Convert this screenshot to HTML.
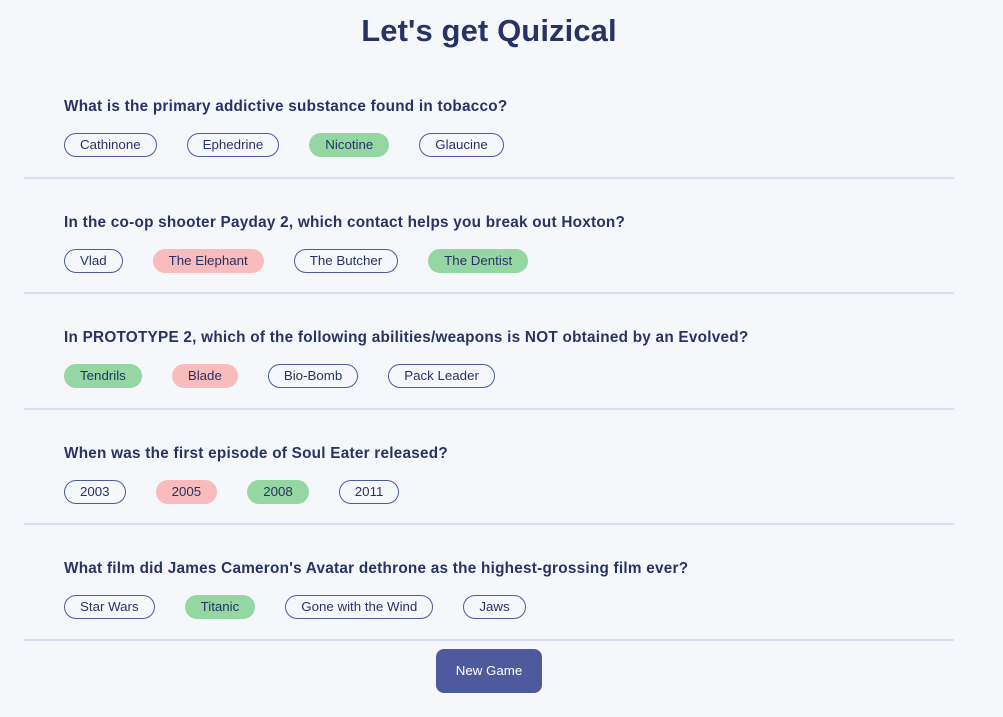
<!DOCTYPE html>
<html><head><style>
body{margin:0;background:#f5f7fb;font-family:"Liberation Sans",sans-serif;color:#293264;width:1003px;height:717px;overflow:hidden}
h1{margin:0;position:absolute;top:13px;left:0;width:978px;text-align:center;font-size:31px;letter-spacing:0.1px;font-weight:bold;color:#293264}
.wrap{position:absolute;top:63px;left:24px;width:930px}
.q{border-bottom:2px solid #dbdef0;height:113.5px;box-sizing:content-box;position:relative}
.q h2{position:absolute;top:34px;left:40px;margin:0;font-size:15.3px;letter-spacing:0.25px;line-height:20px;font-weight:bold;color:#293264;white-space:nowrap}
.opts{position:absolute;top:70px;left:40px;display:flex}
.p{height:24px;line-height:22px;box-sizing:border-box;border:1px solid #4d5b9e;border-radius:12px;padding:0 15px;font-size:13.3px;margin-right:30px;color:#293264}
.g{background:#94d7a2;border-color:#94d7a2}
.r{background:#f8bcbc;border-color:#f8bcbc}
.btn{position:absolute;left:436px;top:649px;width:106px;height:44px;background:#4d5b9e;color:#fff;border-radius:8px;text-align:center;line-height:44px;font-size:13.3px}
</style></head><body>
<h1>Let's get Quizical</h1>
<div class="wrap">
<div class="q"><h2>What is the primary addictive substance found in tobacco?</h2><div class="opts"><span class="p">Cathinone</span><span class="p">Ephedrine</span><span class="p g">Nicotine</span><span class="p">Glaucine</span></div></div>
<div class="q"><h2>In the co-op shooter Payday 2, which contact helps you break out Hoxton?</h2><div class="opts"><span class="p">Vlad</span><span class="p r">The Elephant</span><span class="p">The Butcher</span><span class="p g">The Dentist</span></div></div>
<div class="q"><h2>In PROTOTYPE 2, which of the following abilities/weapons is NOT obtained by an Evolved?</h2><div class="opts"><span class="p g">Tendrils</span><span class="p r">Blade</span><span class="p">Bio-Bomb</span><span class="p">Pack Leader</span></div></div>
<div class="q"><h2>When was the first episode of Soul Eater released?</h2><div class="opts"><span class="p">2003</span><span class="p r">2005</span><span class="p g">2008</span><span class="p">2011</span></div></div>
<div class="q"><h2>What film did James Cameron's Avatar dethrone as the highest-grossing film ever?</h2><div class="opts"><span class="p">Star Wars</span><span class="p g">Titanic</span><span class="p">Gone with the Wind</span><span class="p">Jaws</span></div></div>
</div>
<div class="btn">New Game</div>
</body></html>
